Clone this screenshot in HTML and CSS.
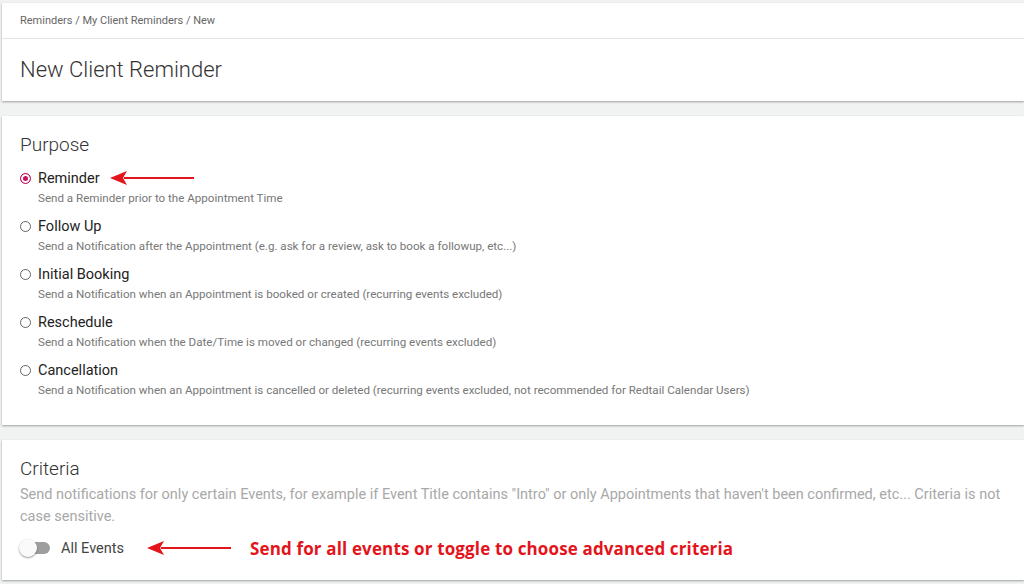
FILE: index.html
```html
<!DOCTYPE html>
<html>
<head>
    <link rel="stylesheet" href="styles.css">
</head>
<body>
    <div class="page">
        <div class="card top-card">
            <div class="crumbs">Reminders / My Client Reminders / New</div>
            <div class="title">New Client Reminder</div>
        </div>

        <div class="card section">
            <div class="section-title">Purpose</div>

            <div class="option">
                <div class="option-row">
                    <span class="radio checked"></span>
                    <span class="option-label">Reminder</span>
                    <svg class="arrow arrow-short" width="84" height="14" viewBox="0 0 84 14">
                        <path d="M84 6 L14 6 L14 8 L84 8 Z" fill="#e3141b"/>
                        <path d="M0 7 L17 0 L13 7 L17 14 Z" fill="#e3141b"/>
                    </svg>
                </div>
                <div class="option-desc">Send a Reminder prior to the Appointment Time</div>
            </div>
            <div class="option">
                <div class="option-row">
                    <span class="radio"></span>
                    <span class="option-label">Follow Up</span>
                </div>
                <div class="option-desc">Send a Notification after the Appointment (e.g. ask for a review, ask to book a followup, etc...)</div>
            </div>
            <div class="option">
                <div class="option-row">
                    <span class="radio"></span>
                    <span class="option-label">Initial Booking</span>
                </div>
                <div class="option-desc">Send a Notification when an Appointment is booked or created (recurring events excluded)</div>
            </div>
            <div class="option">
                <div class="option-row">
                    <span class="radio"></span>
                    <span class="option-label">Reschedule</span>
                </div>
                <div class="option-desc">Send a Notification when the Date/Time is moved or changed (recurring events excluded)</div>
            </div>
            <div class="option">
                <div class="option-row">
                    <span class="radio"></span>
                    <span class="option-label">Cancellation</span>
                </div>
                <div class="option-desc">Send a Notification when an Appointment is cancelled or deleted (recurring events excluded, not recommended for Redtail Calendar Users)</div>
            </div>
        </div>

        <div class="card section criteria">
            <div class="section-title">Criteria</div>
            <div class="criteria-desc">Send notifications for only certain Events, for example if Event Title contains "Intro" or only Appointments that haven't been confirmed, etc... Criteria is not case sensitive.</div>
            <div class="toggle-row">
                <span class="toggle"><span class="knob"></span></span>
                <span class="toggle-label">All Events</span>
                <svg class="arrow arrow-long" width="84" height="14" viewBox="0 0 84 14">
                    <path d="M84 6 L14 6 L14 8 L84 8 Z" fill="#e3141b"/>
                    <path d="M0 7 L17 0 L13 7 L17 14 Z" fill="#e3141b"/>
                </svg>
                <span class="note">Send for all events or toggle to choose advanced criteria</span>
            </div>
        </div>
    </div>
</body>
</html>
```

FILE: styles.css
```css
body {
    margin: 0;
    background-color: #f1f2f2;
    font-family: Roboto, "Liberation Sans", sans-serif;
    color: #333;
}

.page {
    padding: 3px 0 0 2px;
}

.card {
    background-color: white;
    box-shadow: 0 1px 2px rgba(0, 0, 0, 0.35);
    margin-bottom: 15px;
}

.crumbs {
    height: 35px;
    line-height: 35px;
    padding-left: 18px;
    font-size: 11px;
    color: #666;
    border-bottom: 1px solid #e3e3e3;
}

.title {
    height: 62px;
    line-height: 62px;
    padding-left: 18px;
    font-size: 22px;
    font-weight: 300;
    color: #333;
}

.section {
    padding: 17px 18px 19px;
}

.section-title {
    font-size: 19px;
    font-weight: 300;
    color: #333;
    line-height: 24px;
    margin-bottom: 9px;
}

.option {
    height: 48px;
}

.option-row {
    display: flex;
    align-items: center;
    height: 24px;
}

.radio {
    width: 9px;
    height: 9px;
    border: 1px solid #666;
    border-radius: 50%;
    margin: 0 7px 0 0;
    box-sizing: content-box;
}

.radio.checked {
    border-color: #c2185b;
    background-color: #c2185b;
    box-shadow: inset 0 0 0 2px white;
}

.option-label {
    font-size: 14.5px;
    color: #222;
}

.arrow-short {
    margin-left: 10px;
}

.option-desc {
    font-size: 11.6px;
    color: #777;
    padding-left: 18px;
    line-height: 16px;
}

.criteria {
    padding: 17px 10px 17px 18px;
}

.criteria .section-title {
    margin-bottom: 3px;
}

.criteria-desc {
    font-size: 14.5px;
    color: #a8a8a8;
    line-height: 22px;
}

.toggle-row {
    display: flex;
    align-items: center;
    height: 30px;
    margin-top: 5px;
}

.toggle {
    position: relative;
    width: 30px;
    height: 12px;
    border-radius: 6px;
    background-color: #9e9e9e;
    margin-right: 11px;
}

.knob {
    position: absolute;
    left: -1px;
    top: -3px;
    width: 18px;
    height: 18px;
    border-radius: 50%;
    background-color: #fafafa;
    box-shadow: 0 1px 2px rgba(0, 0, 0, 0.4);
}

.toggle-label {
    font-size: 14.5px;
    color: #444;
}

.arrow-long {
    margin-left: 23px;
}

.note {
    margin-left: 19px;
    font-family: "Open Sans", sans-serif;
    font-weight: 700;
    font-size: 17px;
    letter-spacing: 0.14px;
    color: #e3141b;
}
```
